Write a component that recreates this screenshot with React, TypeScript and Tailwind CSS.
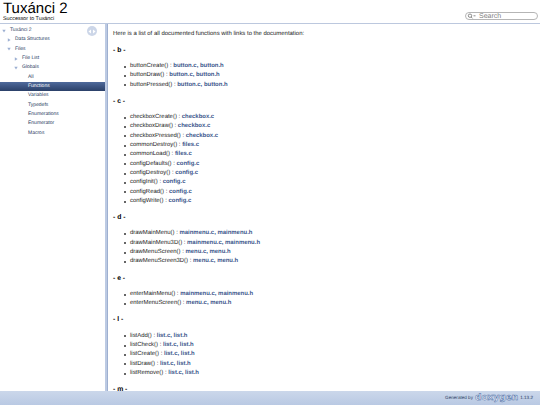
const nav = [
  { label: "Tuxánci 2", indent: "pl-[2px]", arrow: "down" },
  { label: "Data Structures", indent: "pl-[7px]", arrow: "right" },
  { label: "Files", indent: "pl-[7px]", arrow: "down" },
  { label: "File List", indent: "pl-[14px]", arrow: "right" },
  { label: "Globals", indent: "pl-[14px]", arrow: "down" },
  { label: "All", indent: "pl-[28px]" },
  { label: "Functions", indent: "pl-[28px]", active: true },
  { label: "Variables", indent: "pl-[28px]" },
  { label: "Typedefs", indent: "pl-[28px]" },
  { label: "Enumerations", indent: "pl-[28px]" },
  { label: "Enumerator", indent: "pl-[28px]" },
  { label: "Macros", indent: "pl-[28px]" },
];

const sections = [
  {
    letter: "b",
    items: [
      ["buttonCreate()", "button.c, button.h"],
      ["buttonDraw()", "button.c, button.h"],
      ["buttonPressed()", "button.c, button.h"],
    ],
  },
  {
    letter: "c",
    items: [
      ["checkboxCreate()", "checkbox.c"],
      ["checkboxDraw()", "checkbox.c"],
      ["checkboxPressed()", "checkbox.c"],
      ["commonDestroy()", "files.c"],
      ["commonLoad()", "files.c"],
      ["configDefaults()", "config.c"],
      ["configDestroy()", "config.c"],
      ["configInit()", "config.c"],
      ["configRead()", "config.c"],
      ["configWrite()", "config.c"],
    ],
  },
  {
    letter: "d",
    items: [
      ["drawMainMenu()", "mainmenu.c, mainmenu.h"],
      ["drawMainMenu3D()", "mainmenu.c, mainmenu.h"],
      ["drawMenuScreen()", "menu.c, menu.h"],
      ["drawMenuScreen3D()", "menu.c, menu.h"],
    ],
  },
  {
    letter: "e",
    items: [
      ["enterMainMenu()", "mainmenu.c, mainmenu.h"],
      ["enterMenuScreen()", "menu.c, menu.h"],
    ],
  },
  {
    letter: "l",
    items: [
      ["listAdd()", "list.c, list.h"],
      ["listCheck()", "list.c, list.h"],
      ["listCreate()", "list.c, list.h"],
      ["listDraw()", "list.c, list.h"],
      ["listRemove()", "list.c, list.h"],
    ],
  },
  { letter: "m", items: [] as string[][] },
];

function Arrow({ dir }: { dir: string }) {
  return (
    <svg width="4" height="4" viewBox="0 0 4 4" className="mr-[4px] shrink-0">
      <path d={dir === "down" ? "M0.3 0.8 H3.7 L2 3.6 Z" : "M0.8 0.3 V3.7 L3.6 2 Z"} fill="#9db0d2" />
    </svg>
  );
}

export default function App() {
  return (
    <div className="h-[405px] w-[540px] overflow-hidden flex flex-col bg-white text-black [text-rendering:geometricPrecision] font-['Liberation_Sans',Arial,sans-serif]">
      {/* header */}
      <div className="h-[24px] shrink-0 flex justify-between border-b border-[#bcc8de]">
        <div className="pl-[3px]">
          <div className="text-[15px] leading-[15px] pt-[1px]">Tuxánci 2</div>
          <div className="text-[5.4px] leading-[6px]">Successor to Tuxánci</div>
        </div>
        <div className="mt-[12px] mr-[2px] w-[73px] h-[8px] rounded-full border border-[#b5b5b5] flex items-center text-[7px] leading-[8px] text-[#808080]">
          <svg width="9" height="6" viewBox="0 0 9 6" className="ml-[1px] mr-[3px]">
            <circle cx="3" cy="2.7" r="1.7" fill="none" stroke="#707070" strokeWidth="0.8" />
            <path d="M4.2 4 L5.5 5.4 M6.5 2.8 H8.5" stroke="#707070" strokeWidth="0.8" />
          </svg>
          <span className="pt-[1px]">Search</span>
        </div>
      </div>

      <div className="flex-1 min-h-0 flex">
        {/* sidebar */}
        <div className="relative w-[105px] shrink-0 pt-[2px] text-[5px] text-[#283a5d]">
          {nav.map((n) => (
            <div
              key={n.label}
              className={`h-[9.33px] flex items-center ${n.indent} ${n.active ? "bg-gradient-to-b from-[#4f6a9c] to-[#2b4069] text-white" : ""}`}
            >
              {n.arrow && <Arrow dir={n.arrow} />}
              <span>{n.label}</span>
            </div>
          ))}
          {/* sync toggle */}
          <div className="absolute left-[87px] top-[2px] w-[10px] h-[10px] rounded-full bg-[#ccd6e8] flex items-center justify-center">
            <svg width="8" height="5" viewBox="0 0 8 5">
              <path d="M0.5 2.5 L3 0.5 V4.5 Z M7.5 2.5 L5 0.5 V4.5 Z" fill="#ffffff" />
            </svg>
          </div>
        </div>
        {/* split bar */}
        <div className="w-[3px] shrink-0 bg-[#bccae3] border-r border-[#9fb0d0]" />

        {/* content */}
        <div className="flex-1 min-w-0 overflow-hidden pl-[5px] pt-[5.5px] text-[5.95px] leading-[9.33px] text-[#1a1a1a]">
          <div>Here is a list of all documented functions with links to the documentation:</div>
          {sections.map((s) => (
            <div key={s.letter}>
              <div className="mt-[6.9px] mb-[6.9px] h-[9.33px] text-[6.8px] leading-[9.33px] font-bold text-black">- {s.letter} -</div>
              <ul>
                {s.items.map(([fn, files]) => (
                  <li key={fn} className="h-[9.33px] flex items-center pl-[11px]">
                    <span className="w-[2px] h-[2px] mr-[4px] shrink-0 rounded-full bg-[#333333]" />
                    <span>
                      {fn} : <span className="font-bold text-[#3d578c]">{files}</span>
                    </span>
                  </li>
                ))}
              </ul>
            </div>
          ))}
        </div>
      </div>

      {/* footer */}
      <div className="h-[14px] shrink-0 bg-gradient-to-b from-[#cbd7ea] to-[#b9c9e3] flex items-center justify-end pr-[7px] text-[4.6px] text-[#2a3d61]">
        <span>Generated by</span>
        <span className="mx-[2px] h-[9px] text-[9px] leading-[8px] font-bold text-[#e3eaf5] [-webkit-text-stroke:0.5px_#4f6fa6] font-['DejaVu_Sans',sans-serif]">doxygen</span>
        <span>1.13.2</span>
      </div>
    </div>
  );
}
